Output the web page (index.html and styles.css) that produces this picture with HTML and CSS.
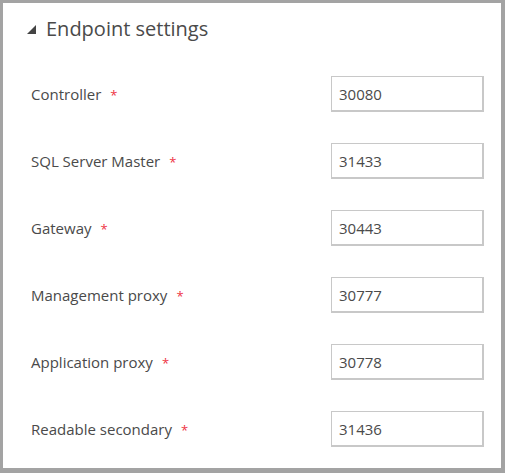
FILE: index.html
```html
<!DOCTYPE html>
<html>
<head>
<meta charset="utf-8">
<link rel="stylesheet" href="styles.css">
</head>
<body>
<div class="panel">
  <div class="header">
    <svg class="caret" width="9" height="9" viewBox="0 0 9 9"><polygon points="9,0 9,9 0,9" fill="#444"/></svg>
    <span class="title">Endpoint settings</span>
  </div>
  <div class="fields">
    <div class="row"><label class="label">Controller<span class="req">*</span></label><input class="field" value="30080"></div>
    <div class="row"><label class="label">SQL Server Master<span class="req">*</span></label><input class="field" value="31433"></div>
    <div class="row"><label class="label">Gateway<span class="req">*</span></label><input class="field" value="30443"></div>
    <div class="row"><label class="label">Management proxy<span class="req">*</span></label><input class="field" value="30777"></div>
    <div class="row"><label class="label">Application proxy<span class="req">*</span></label><input class="field" value="30778"></div>
    <div class="row"><label class="label">Readable secondary<span class="req">*</span></label><input class="field" value="31436"></div>
  </div>
</div>
</body>
</html>
```
FILE: styles.css
```css
html, body {
  margin: 0;
  padding: 0;
  height: 100%;
}
body {
  background: #a3a3a3;
  padding: 3px 4px 5px 3px;
  box-sizing: border-box;
  font-family: "Open Sans", "Liberation Sans", sans-serif;
  color: #4a4a4a;
}
.panel {
  background: #fff;
  height: 100%;
  box-sizing: border-box;
  padding: 12px 17px 0 28px;
}
.header {
  display: flex;
  align-items: center;
  height: 28px;
  margin-left: -4px;
}
.caret {
  display: block;
  margin-right: 10px;
  margin-top: 1px;
}
.title {
  font-size: 20px;
  line-height: 28px;
  color: #4a4a4a;
}
.fields {
  display: flex;
  flex-direction: column;
  gap: 31px;
  margin-top: 33px;
}
.row {
  display: flex;
  align-items: center;
  justify-content: space-between;
  height: 36px;
}
.label {
  font-size: 15px;
  color: #4a4a4a;
}
.req {
  color: #ee3344;
  margin-left: 9px;
  font-size: 13px;
}
.field {
  width: 153px;
  height: 36px;
  box-sizing: border-box;
  border: 1px solid #c8c8c8;
  border-right-width: 2px;
  border-bottom-width: 2px;
  padding: 0 0 0 7px;
  font-family: "Open Sans", "Liberation Sans", sans-serif;
  font-size: 15px;
  color: #4a4a4a;
  outline: none;
  margin: 0;
}
```
